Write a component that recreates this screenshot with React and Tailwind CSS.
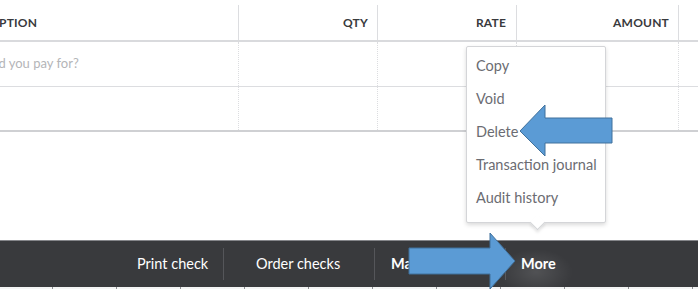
import React from 'react'

const font = { fontFamily: 'Lato, "Open Sans", sans-serif' }

const Header = () => (
  <div className="flex pt-[5px] border-b-2 border-[#d9dadd] text-[12px] font-bold text-[#393a3d] tracking-[0.2px]">
    <div className="w-[239px] h-[35px] border-r border-[#dcdde0] flex items-center overflow-hidden">
      <span className="-ml-[44px] whitespace-nowrap">DESCRIPTION</span>
    </div>
    <div className="w-[139px] h-[35px] border-r border-[#dcdde0] flex items-center justify-end pr-[9px]">QTY</div>
    <div className="w-[139px] h-[35px] border-r border-[#dcdde0] flex items-center justify-end pr-[10px]">RATE</div>
    <div className="w-[162px] h-[35px] border-r border-[#dcdde0] flex items-center justify-end pr-[9px]">AMOUNT</div>
    <div className="flex-1" />
  </div>
)

const Row = ({ text, last }) => (
  <div className={`flex h-[45px] ${last ? 'border-b-2 border-[#cfd0d3]' : 'border-b border-[#dcdde0]'}`}>
    <div className="w-[239px] border-r border-dotted border-[#dcdde0] flex items-center overflow-hidden">
      {text && <span className="-ml-[47px] whitespace-nowrap text-[13px] text-[#b4b5b8]">{text}</span>}
    </div>
    <div className="w-[139px] border-r border-dotted border-[#dcdde0]" />
    <div className="w-[139px] border-r border-dotted border-[#dcdde0]" />
    <div className="w-[162px] border-r border-dotted border-[#dcdde0]" />
    <div className="flex-1" />
  </div>
)

const items = ['Copy', 'Void', 'Delete', 'Transaction journal', 'Audit history']

const Menu = () => (
  <div className="absolute left-[466px] top-[46px] w-[140px] bg-white border border-[#d4d5d8] rounded-[2px] shadow-[0_2px_4px_rgba(0,0,0,0.15)] pt-[2px] pb-[8px] pl-[9px]">
    {items.map((t) => (
      <div key={t} className="h-[33px] leading-[33px] text-[14.5px] text-[#6b6c72] whitespace-nowrap">{t}</div>
    ))}
    <div className="absolute left-[65px] -bottom-[6px] w-[11px] h-[11px] bg-white rotate-45 border-r border-b border-[#d4d5d8] shadow-[2px_2px_3px_rgba(0,0,0,0.1)]" />
  </div>
)

const Footer = () => (
  <div className="relative h-[49px] bg-[#393a3d] border-t border-[#85868a]">
    <div className="flex items-center h-[46px] text-[14.5px] text-white pl-[137px]">
      <div className="w-[86px]">Print check</div>
      <div className="w-px h-[32px] bg-[#55565a]" />
      <div className="w-[150px] pl-[32px]">Order checks</div>
      <div className="w-px h-[32px] bg-[#55565a]" />
      <div className="w-[130px] pl-[16px] font-bold whitespace-nowrap overflow-hidden">Make recurring</div>
      <div className="w-px h-[32px] bg-[#55565a]" />
      <div className="relative pl-[15px] font-bold">
        <div className="absolute -left-[10px] top-[-6px] w-[80px] h-[50px] bg-[radial-gradient(ellipse_at_center,rgba(255,255,255,0.12),transparent_65%)]" />
        <span className="relative">More</span>
      </div>
    </div>
    <div className="absolute left-0 right-0 bottom-0 h-[2px] bg-[#f4f4f5] flex">
      {Array.from({ length: 11 }).map((_, i) => (
        <div key={i} className={`w-px h-[2px] bg-[#8d8e92] ${i === 0 ? 'ml-[52px]' : 'ml-[63px]'}`} />
      ))}
    </div>
  </div>
)

export default function App() {
  return (
    <div className="relative w-[698px] h-[289px] overflow-hidden bg-white" style={font}>
      <div className="h-[240px]">
        <Header />
        <Row text="What did you pay for?" />
        <Row last />
      </div>
      <Footer />
      <Menu />
      <svg className="absolute inset-0 pointer-events-none" width="698" height="289" viewBox="0 0 698 289">
        <polygon points="520,131 545,105 545,118 612,118 612,143 545,143 545,156" fill="#5b9bd5" stroke="#41719c" strokeWidth="1" />
        <polygon points="409,248 490,248 490,233 515,261 490,289 490,274 409,274" fill="#5b9bd5" stroke="#41719c" strokeWidth="1" />
      </svg>
    </div>
  )
}
